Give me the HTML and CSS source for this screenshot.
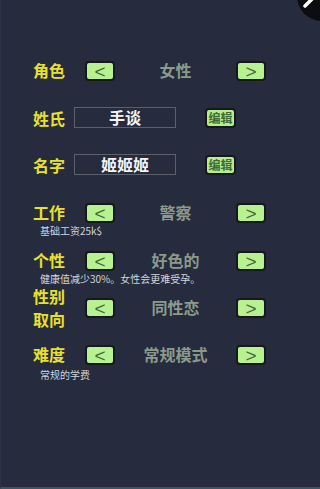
FILE: index.html
```html
<!DOCTYPE html>
<html lang="zh">
<head>
    <meta charset="UTF-8">
    <meta name="viewport" content="width=device-width, initial-scale=1.0">
    <title>角色设定</title>
    <link rel="stylesheet" href="styles.css">
</head>
<body>
    <div class="panel">
        <button class="close-btn" type="button">
            <svg width="50" height="50" viewBox="0 0 50 50">
                <circle cx="25" cy="25" r="25" fill="#0c0d10"/>
                <path d="M8 35 L26 17 M12 15 L30 33" stroke="#ffffff" stroke-width="3.5" stroke-linecap="round"/>
            </svg>
        </button>

        <div class="row row-role">
            <span class="label">角色</span>
            <button class="arrow" type="button">&lt;</button>
            <span class="value">女性</span>
            <button class="arrow" type="button">&gt;</button>
        </div>

        <div class="row row-input row-surname">
            <span class="label">姓氏</span>
            <div class="name-box">手谈</div>
            <button class="edit" type="button">编辑</button>
        </div>

        <div class="row row-input row-name">
            <span class="label">名字</span>
            <div class="name-box">姬姬姬</div>
            <button class="edit" type="button">编辑</button>
        </div>

        <div class="row row-job">
            <span class="label">工作</span>
            <button class="arrow" type="button">&lt;</button>
            <span class="value">警察</span>
            <button class="arrow" type="button">&gt;</button>
        </div>
        <p class="note">基础工资25k$</p>

        <div class="row row-trait">
            <span class="label">个性</span>
            <button class="arrow" type="button">&lt;</button>
            <span class="value">好色的</span>
            <button class="arrow" type="button">&gt;</button>
        </div>
        <p class="note">健康值减少30%。女性会更难受孕。</p>

        <div class="row row-orient">
            <span class="label label-two">性别<br>取向</span>
            <button class="arrow" type="button">&lt;</button>
            <span class="value">同性恋</span>
            <button class="arrow" type="button">&gt;</button>
        </div>

        <div class="row row-level">
            <span class="label">难度</span>
            <button class="arrow" type="button">&lt;</button>
            <span class="value">常规模式</span>
            <button class="arrow" type="button">&gt;</button>
        </div>
        <p class="note note-last">常规的学费</p>
    </div>
</body>
</html>
```

FILE: styles.css
```css
* {
    margin: 0;
    padding: 0;
    box-sizing: border-box;
    font-family: 'Noto Sans CJK SC', 'Noto Sans', sans-serif;
}

body {
    background-color: #262b3d;
    width: 320px;
    height: 489px;
    overflow: hidden;
}

.panel {
    position: relative;
    height: 489px;
    padding: 61px 0 0 32px;
    border-bottom: 2px solid #3f5560;
    border-left: 1px solid #2d3346;
    overflow: hidden;
}

.close-btn {
    position: absolute;
    top: -29px;
    right: -27px;
    width: 50px;
    height: 50px;
    border: none;
    background: none;
}

.row {
    display: grid;
    grid-template-columns: 52px 30px 121px 30px;
    align-items: center;
    height: 20px;
}

.label {
    color: #e6e12c;
    font-size: 16px;
    font-weight: bold;
    line-height: 18px;
    margin-top: -2px;
}

.label-two {
    line-height: 23px;
    margin-top: -1px;
}

.arrow {
    width: 30px;
    height: 20px;
    background: #b8f290;
    border: 2px solid #16181c;
    border-radius: 4px;
    color: #46663c;
    font-family: 'Liberation Sans', sans-serif;
    font-size: 19px;
    line-height: 15px;
    text-align: center;
}

.value {
    color: #8b9a8a;
    font-size: 16px;
    font-weight: bold;
    line-height: 18px;
    margin-top: -2px;
    text-align: center;
}

.row-input {
    display: flex;
    height: 21px;
    margin-top: 26px;
}

.row-input .label {
    width: 41px;
    margin-top: 0;
}

.name-box {
    width: 102px;
    height: 21px;
    border: 1px solid #5c606c;
    color: #f4f4f4;
    font-size: 16px;
    font-weight: bold;
    line-height: 19px;
    text-align: center;
}

.edit {
    margin-left: 29px;
    width: 31px;
    height: 20px;
    background: #b5ee8e;
    border: 2px solid #16181c;
    border-radius: 4px;
    color: #3f6a36;
    font-size: 12px;
    font-weight: bold;
    line-height: 15px;
    text-align: center;
}

.row-job {
    margin-top: 28px;
}

.row-trait {
    margin-top: 14px;
}

.row-orient {
    height: 46px;
}

.row-level {
    margin-top: 14px;
}

.note {
    margin: 2px 0 0 7px;
    color: #d2d5da;
    font-size: 10px;
    line-height: 12px;
}

.note-last {
    margin-top: 4px;
}
```
